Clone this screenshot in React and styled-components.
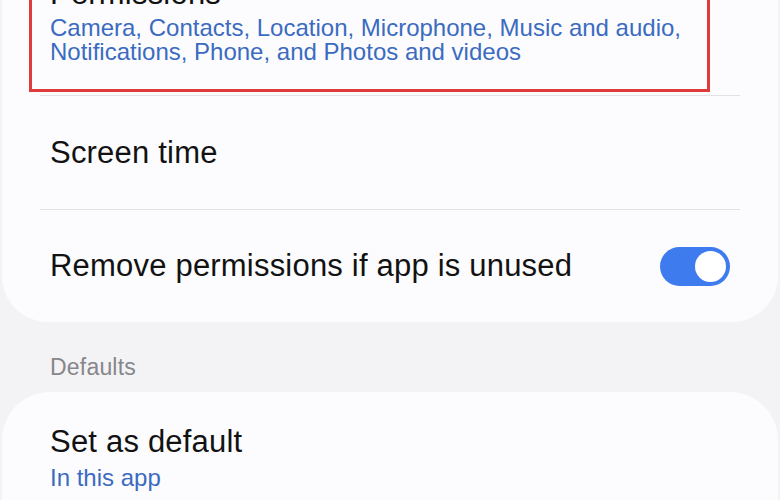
import React from "react";
import styled, { createGlobalStyle } from "styled-components";

const Global = createGlobalStyle`
  html, body { margin: 0; padding: 0; background: #f3f3f5; overflow: hidden; }
  body { font-family: "Liberation Sans", Arial, Helvetica, sans-serif; }
  * { box-sizing: border-box; }
`;

const Page = styled.div`
  width: 780px;
  height: 500px;
  overflow: hidden;
  display: flex;
  flex-direction: column;
  padding: 0 2px;
`;

const Card = styled.section`
  background: #fcfcfe;
  border-radius: ${(p) => p.$radius || "46px"};
  margin-top: ${(p) => p.$offset || "0"};
  display: flex;
  flex-direction: column;
`;

const Row = styled.div`
  position: relative;
  display: flex;
  align-items: center;
  justify-content: space-between;
  min-height: ${(p) => p.$h || "113px"};
  padding: ${(p) => p.$pad || "0"} 48px;
`;

const Divider = styled.div`
  height: 1px;
  margin: 0 38px;
  background: #e2e2e5;
`;

const TextBlock = styled.div`
  display: flex;
  flex-direction: column;
`;

const Title = styled.div`
  font-size: 31px;
  line-height: 36px;
  letter-spacing: 0.2px;
  color: #121212;
`;

const Sub = styled.div`
  font-size: 24px;
  line-height: 24px;
  color: #3b6bc0;
  margin-top: ${(p) => p.$gap || "4px"};
`;

const SectionHeader = styled.div`
  font-size: 23px;
  line-height: 26px;
  letter-spacing: 0.2px;
  color: #86868b;
  padding: 32px 48px 12px;
`;

const Highlight = styled.div`
  position: absolute;
  left: 27px;
  right: 68px;
  top: 0;
  bottom: 3px;
  border: 3px solid #e03b3b;
  pointer-events: none;
`;

const Toggle = styled.div`
  position: relative;
  width: 70px;
  height: 39px;
  border-radius: 20px;
  background: #3e7bef;
  flex-shrink: 0;
`;

const Knob = styled.div`
  position: absolute;
  top: 4px;
  right: 4px;
  width: 31px;
  height: 31px;
  border-radius: 50%;
  background: #ffffff;
`;

export default function App() {
  return (
    <>
      <Global />
      <Page>
        <Card $offset="-55px">
          <Row $pad="31px">
            <TextBlock>
              <Title>Permissions</Title>
              <Sub $gap="4px">
                Camera, Contacts, Location, Microphone, Music and audio,
                <br />
                Notifications, Phone, and Photos and videos
              </Sub>
            </TextBlock>
            <Highlight />
          </Row>
          <Divider />
          <Row>
            <Title>Screen time</Title>
          </Row>
          <Divider />
          <Row $h="112px">
            <Title>Remove permissions if app is unused</Title>
            <Toggle>
              <Knob />
            </Toggle>
          </Row>
        </Card>
        <SectionHeader>Defaults</SectionHeader>
        <Card $radius="48px 48px 0 0">
          <Row $pad="32px" $h="0">
            <TextBlock>
              <Title>Set as default</Title>
              <Sub $gap="6px">In this app</Sub>
            </TextBlock>
          </Row>
        </Card>
      </Page>
    </>
  );
}
